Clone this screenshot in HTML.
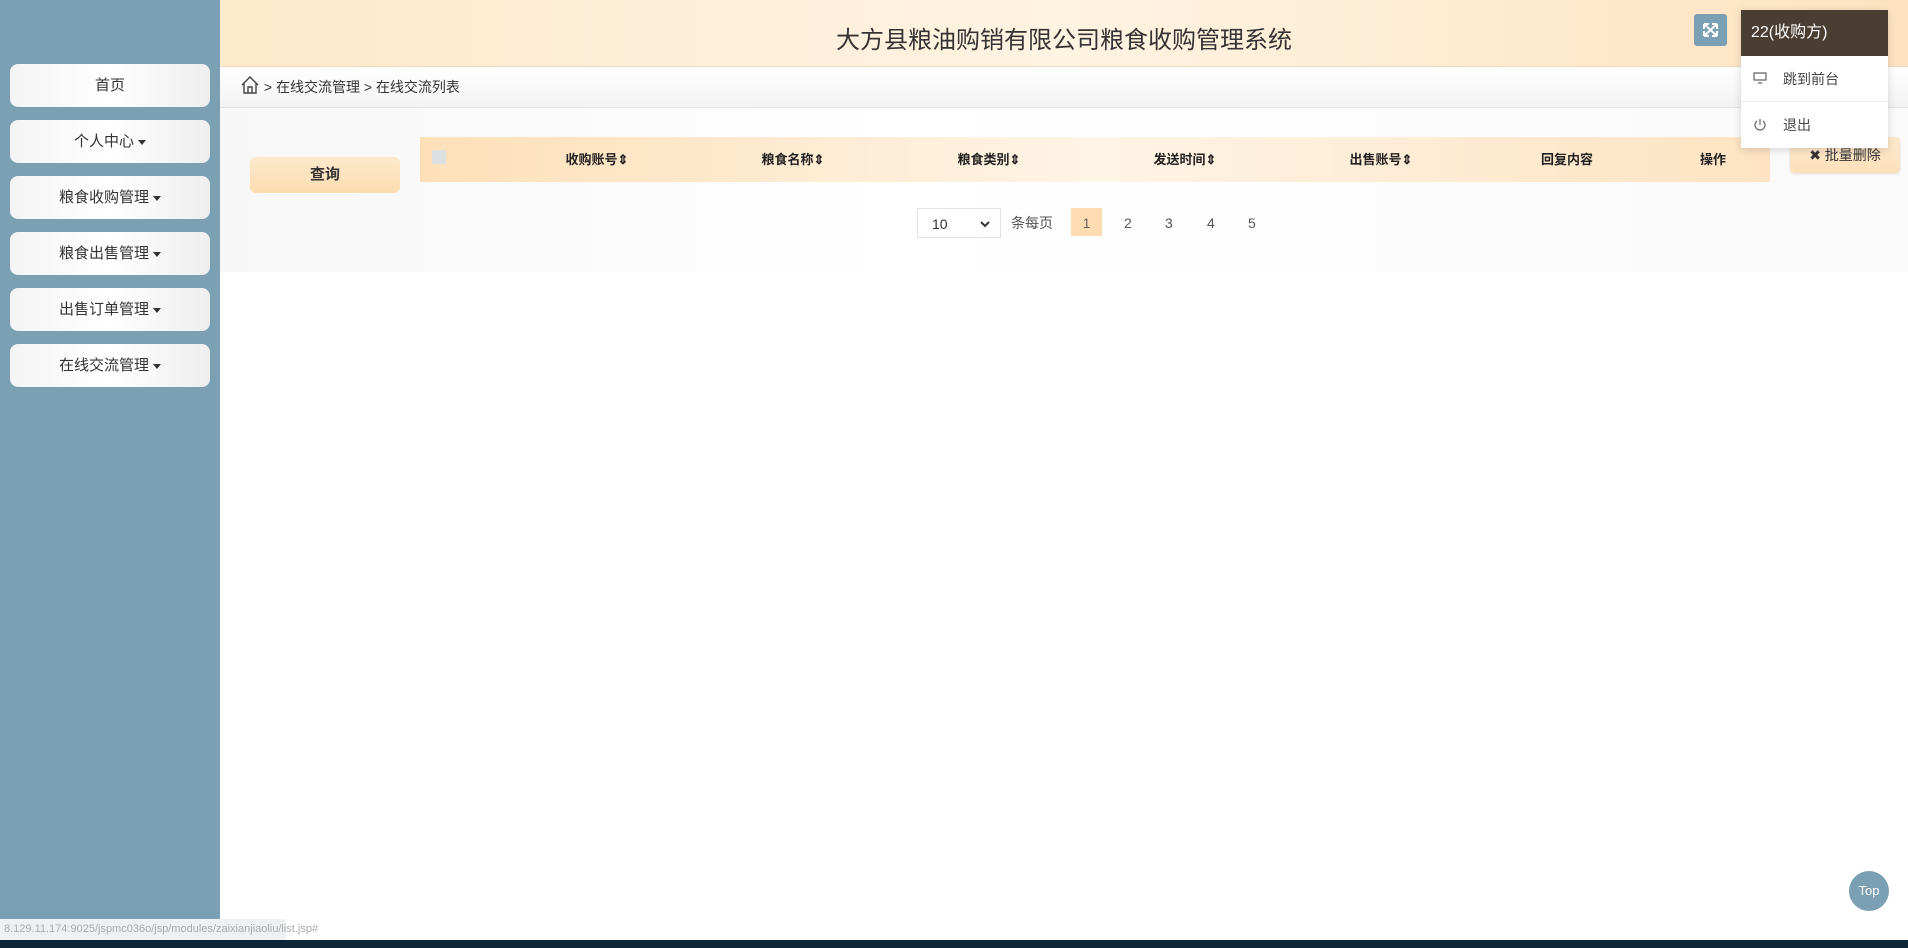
<!DOCTYPE html>
<html><head><meta charset="utf-8"><style>
*{margin:0;padding:0;box-sizing:border-box}
body{width:1908px;height:948px;overflow:hidden;background:#fff;font-family:"Liberation Sans","Noto Sans CJK SC",sans-serif;position:relative;color:#333}
.side{position:absolute;left:0;top:0;width:220px;height:940px;background:#7b9fb3}
.nb{position:absolute;left:10px;width:200px;height:43px;border-radius:8px;background:linear-gradient(90deg,#f4f4f4,#fff 50%,#eee);font-size:15px;text-align:center;line-height:43px;color:#333}
.car{display:inline-block;border-left:4px solid transparent;border-right:4px solid transparent;border-top:5px solid #333;vertical-align:middle;margin-left:4px}
.hdr{position:absolute;left:220px;top:0;width:1688px;height:67px;background:linear-gradient(90deg,#fde9cc,#fff3e2 50%,#fde3c0);border-bottom:1px solid #f0d8b8}
.title{position:absolute;left:0;width:1688px;top:20px;text-align:center;font-size:24px;color:#333}
.bc{position:absolute;left:220px;top:67px;width:1688px;height:41px;background:linear-gradient(#fff,#f3f3f3);border-bottom:1px solid #e4e4e4;font-size:14px;line-height:41px;padding-left:20px}
.content{position:absolute;left:220px;top:108px;width:1688px;height:164px;background:linear-gradient(90deg,#f7f7f7,#fff 40%,#fafafa)}
.q{position:absolute;left:250px;top:157px;width:150px;height:36px;border-radius:6px;background:linear-gradient(#fde9cc,#fcdcb0);font-size:15px;font-weight:bold;text-align:center;line-height:36px}
.th{position:absolute;left:420px;top:137px;width:1350px;height:45px;background:linear-gradient(90deg,#fde0b8,#fff4e6 50%,#fde3c2)}
.h{position:absolute;top:0;line-height:45px;font-size:13px;font-weight:bold;color:#222;transform:translateX(-50%);white-space:nowrap}
.pg{position:absolute;top:208px;font-size:14px;line-height:30px}
</style></head><body>
<div class="side">
<div class="nb" style="top:64px">首页</div>
<div class="nb" style="top:120px">个人中心<span class="car"></span></div>
<div class="nb" style="top:176px">粮食收购管理<span class="car"></span></div>
<div class="nb" style="top:232px">粮食出售管理<span class="car"></span></div>
<div class="nb" style="top:288px">出售订单管理<span class="car"></span></div>
<div class="nb" style="top:344px">在线交流管理<span class="car"></span></div>
</div>
<div class="hdr"><div class="title">大方县粮油购销有限公司粮食收购管理系统</div></div>
<div class="bc"><svg width="20" height="20" viewBox="0 0 20 20" style="vertical-align:-3px"><path d="M2 10 L10 2 L18 10 M4 8 V18 H16 V8 M8 18 V12 H12 V18" fill="none" stroke="#444" stroke-width="1.4"/></svg> &gt; 在线交流管理 &gt; 在线交流列表</div>
<div class="content"></div>
<div class="q">查询</div>
<div class="th">
<div style="position:absolute;left:12px;top:13px;width:14px;height:14px;background:#dde0e3"></div>
<div class="h" style="left:177px">收购账号⇕</div>
<div class="h" style="left:373px">粮食名称⇕</div>
<div class="h" style="left:569px">粮食类别⇕</div>
<div class="h" style="left:765px">发送时间⇕</div>
<div class="h" style="left:961px">出售账号⇕</div>
<div class="h" style="left:1147px">回复内容</div>
<div class="h" style="left:1293px">操作</div>
</div>
<div style="position:absolute;left:1790px;top:137px;width:110px;height:36px;border-radius:4px;background:linear-gradient(#fde9cc,#fde0bb);box-shadow:0 1px 2px #ddd;font-size:14px;line-height:36px;text-align:center">✖ 批量删除</div>
<div class="pg" style="left:917px;width:84px;height:30px;border:1px solid #e3e3e3;padding-left:14px">10<svg style="position:absolute;right:10px;top:11px" width="10" height="8" viewBox="0 0 10 8"><path d="M1 2 L5 6 L9 2" fill="none" stroke="#333" stroke-width="2"/></svg></div>
<div class="pg" style="left:1011px;color:#555">条每页</div>
<div class="pg" style="left:1071px;width:31px;height:28px;background:#fcdcb0;text-align:center;color:#666">1</div>
<div class="pg" style="left:1124px;color:#555">2</div>
<div class="pg" style="left:1165px;color:#555">3</div>
<div class="pg" style="left:1207px;color:#555">4</div>
<div class="pg" style="left:1248px;color:#555">5</div>
<div style="position:absolute;left:1694px;top:14px;width:33px;height:32px;border-radius:3px;background:#7b9fb3"><svg width="33" height="32" viewBox="0 0 33 32"><path d="M10 10 L23 22 M23 10 L10 22 M10 10 h5 M10 10 v5 M23 10 h-5 M23 10 v5 M10 22 h5 M10 22 v-5 M23 22 h-5 M23 22 v-5" stroke="#fff" stroke-width="2" fill="none"/></svg></div>
<div style="position:absolute;left:1741px;top:10px;width:147px;height:138px;background:#fff;box-shadow:0 2px 8px rgba(0,0,0,.15)">
<div style="height:46px;background:#4a3d31;color:#fff;font-size:16px;line-height:46px;padding-left:10px">22(收购方)</div>
<div style="height:46px;line-height:46px;font-size:14px;color:#444;padding-left:42px;border-bottom:1px solid #eee;position:relative"><svg style="position:absolute;left:12px;top:16px" width="14" height="12" viewBox="0 0 14 12"><path d="M1 1 H13 V8 H1 Z M5 11 H9" fill="none" stroke="#666" stroke-width="1.2"/></svg>跳到前台</div>
<div style="height:46px;line-height:46px;font-size:14px;color:#444;padding-left:42px;position:relative"><svg style="position:absolute;left:12px;top:16px" width="14" height="14" viewBox="0 0 14 14"><path d="M4 3 A5 5 0 1 0 10 3 M7 1 V7" fill="none" stroke="#666" stroke-width="1.2"/></svg>退出</div>
</div>
<div style="position:absolute;left:1849px;top:871px;width:40px;height:40px;border-radius:50%;background:#7b9fb3;color:#fff;font-size:13px;text-align:center;line-height:40px">Top</div>
<div style="position:absolute;left:0;top:919px;width:286px;height:21px;background:#eef0f1;color:#aaa;font-size:11px;line-height:21px;padding-left:4px">8.129.11.174:9025/jspmc036o/jsp/modules/zaixianjiaoliu/list.jsp#</div>
<div style="position:absolute;left:0;top:940px;width:1908px;height:8px;background:#0c2637"></div>
</body></html>
